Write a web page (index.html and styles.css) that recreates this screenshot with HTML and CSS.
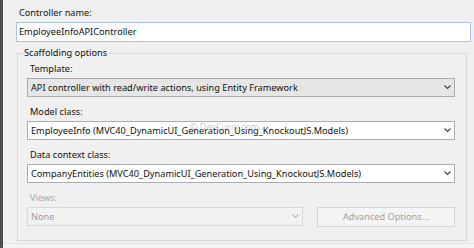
FILE: index.html
```html
<!DOCTYPE html>
<html>
<head>
<meta charset="utf-8">
<title>Add Controller</title>
<link rel="stylesheet" href="styles.css">
</head>
<body>
<div class="window">
	<div class="strip"></div>
	<div class="dialog">
		<div class="lbl">Controller name:</div>
		<div class="textbox">EmployeeInfoAPIController</div>
		<fieldset class="group">
			<legend>Scaffolding options</legend>
			<div class="row">
				<div class="lbl">Template:</div>
				<div class="combo gray">
					<span>API controller with read/write actions, using Entity Framework</span>
					<svg class="chev" width="7" height="5" viewBox="0 0 7 5"><polyline points="0.5,0.5 3.5,3.5 6.5,0.5" fill="none" stroke="#444" stroke-width="1.2"/></svg>
				</div>
			</div>
			<div class="row">
				<div class="lbl">Model class:</div>
				<div class="combo">
					<span>EmployeeInfo (MVC40_DynamicUI_Generation_Using_KnockoutJS.Models)</span>
					<svg class="chev" width="7" height="5" viewBox="0 0 7 5"><polyline points="0.5,0.5 3.5,3.5 6.5,0.5" fill="none" stroke="#444" stroke-width="1.2"/></svg>
					<em class="mark">© DevCurry.com</em>
				</div>
			</div>
			<div class="row">
				<div class="lbl">Data context class:</div>
				<div class="combo">
					<span>CompanyEntities (MVC40_DynamicUI_Generation_Using_KnockoutJS.Models)</span>
					<svg class="chev" width="7" height="5" viewBox="0 0 7 5"><polyline points="0.5,0.5 3.5,3.5 6.5,0.5" fill="none" stroke="#444" stroke-width="1.2"/></svg>
				</div>
			</div>
			<div class="row last">
				<div class="lbl off">Views:</div>
				<div class="views">
					<div class="combo off">
						<span>None</span>
						<svg class="chev" width="7" height="5" viewBox="0 0 7 5"><polyline points="0.5,0.5 3.5,3.5 6.5,0.5" fill="none" stroke="#bbb" stroke-width="1.2"/></svg>
					</div>
					<div class="btn">Advanced Options...</div>
				</div>
			</div>
		</fieldset>
		<div class="foot"></div>
	</div>
</div>
</body>
</html>
```
FILE: styles.css
```css
*{ margin:0; padding:0; box-sizing:border-box;}
body{ width:474px; height:248px; overflow:hidden; background:#f0f0f0; font-family:"Noto Sans","Open Sans",sans-serif; font-size:9.2px; color:#111;}

.window{ display:flex; height:248px;}
.strip{ width:4px; background:#4f4f4f;}
.dialog{ flex:1; padding:6px 3px 0 13px; display:flex; flex-direction:column;}

.lbl{ height:14px; line-height:14px; padding-left:3px; white-space:nowrap;}
.lbl.off{ color:#a8a8a8;}

.textbox{ margin-top:2px; height:20px; line-height:18px; border:1px solid #a9c3e8; background:#fff; padding-left:2px; white-space:nowrap;}

.group{ margin:4px 4px 0 1px; border:1px solid #d8d8d8; padding:0 11px 13px 9px; min-width:0;}
.group legend{ margin-left:-4px; padding:0 1px; line-height:14px;}
.group .lbl{ margin-top:2px;}

.row .lbl{ margin-bottom:2px;}
.row + .row{ margin-top:8px;}

.combo{ position:relative; height:19px; line-height:17px; border:1px solid #abadb3; background:#fff; padding-left:3px; display:flex; align-items:center; justify-content:space-between; white-space:nowrap;}
.combo span{ overflow:hidden;}
.combo.gray{ background:#e6e6e6; border-color:#acacac;}
.combo.off{ background:#f2f2f2; border-color:#d9d9d9; color:#9c9c9c; flex:1;}
.chev{ flex:none; margin:0 3px 0 6px;}

.mark{ position:absolute; left:162px; top:0; font-style:normal; font-size:9px; line-height:10px; color:rgba(150,150,150,0.5);}

.views{ display:flex; gap:14px;}
.views .combo{ width:276px;}
.btn{ width:138px; height:20px; line-height:18px; border:1px solid #d6d6d6; background:#f4f4f4; color:#a2a2a2; text-align:center;}

.foot{ margin-top:2px; flex:1; border-top:1px solid #e2e2e2; background:#f3f3f3; margin-left:-13px; margin-right:-3px;}
```
